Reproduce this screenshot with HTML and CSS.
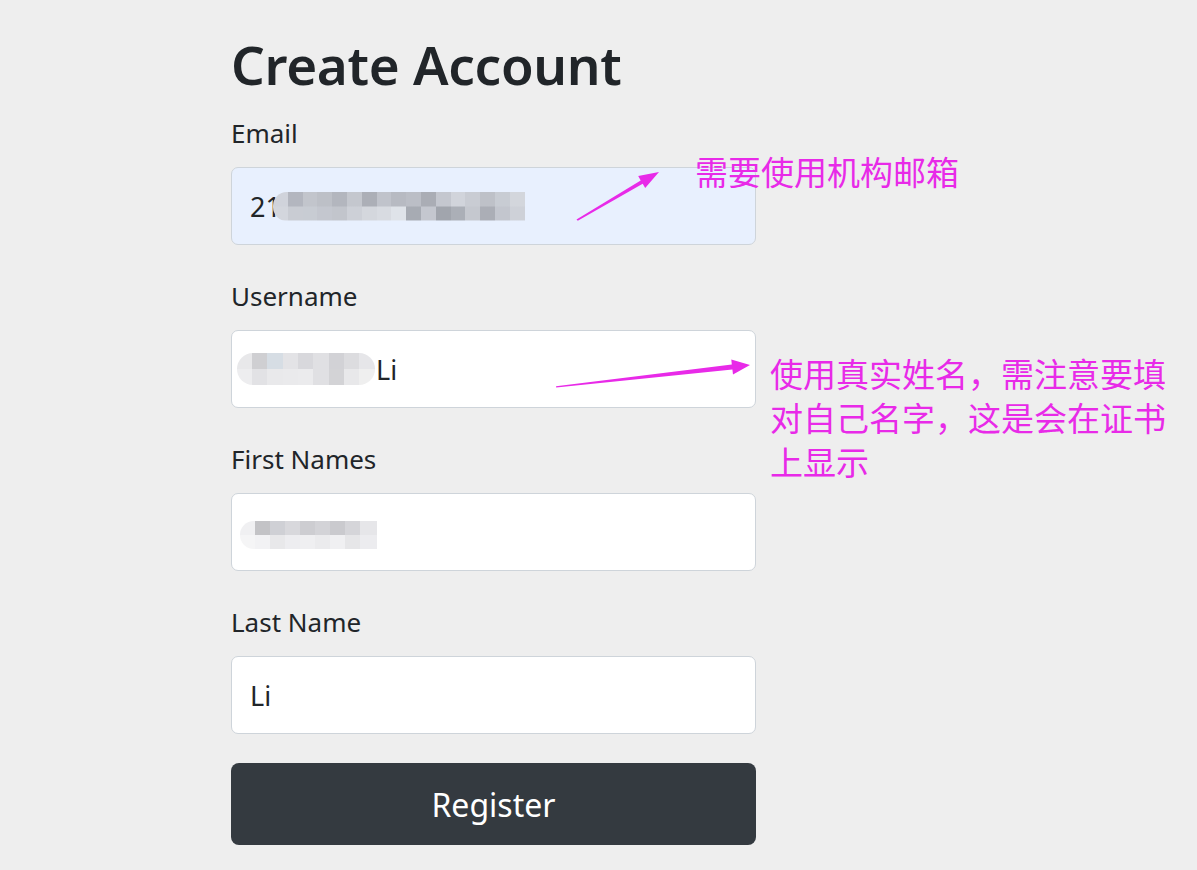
FILE: index.html
```html
<html>
  <head>
    <title>Create Account</title>
    <meta name="viewport" content="width=device-width, initial-scale=1.0" />
    <link rel="stylesheet" href="styles.css">
  </head>
  <body>
    <main class="page">
      <h1>Create Account</h1>
      <form id="register-form">
        <div class="group">
          <label for="email">Email</label>
          <div class="field field-autofill" id="email">21<span class="mosaic mosaic-email"></span></div>
        </div>
        <div class="group">
          <label for="username">Username</label>
          <div class="field" id="username"><span class="mosaic mosaic-user"></span>Li</div>
        </div>
        <div class="group">
          <label for="first-names">First Names</label>
          <div class="field" id="first-names"><span class="mosaic mosaic-first"></span></div>
        </div>
        <div class="group">
          <label for="last-name">Last Name</label>
          <div class="field" id="last-name">Li</div>
        </div>
        <button class="register" type="submit">Register</button>
      </form>
    </main>

    <!-- annotations drawn on top of the form -->
    <svg class="arrows" width="1197" height="870" viewBox="0 0 1197 870">
      <polygon points="576.5,219.5 640.7,180.4 638.2,176.1 659,172 645.2,188.1 642.7,183.8 577.8,220.8" />
      <polygon points="556,386.3 731.8,364.5 731.3,359.5 750,365 733,374.5 732.4,369.5 556.2,387.6" />
    </svg>
    <p class="note note-email">需要使用机构邮箱</p>
    <p class="note note-name">使用真实姓名，需注意要填对自己名字，这是会在证书上显示</p>
  </body>
</html>
```

FILE: styles.css
```css
:root {
  --text: #212529;
  --border: #ced4da;
  --note: #e82ae8;
}

html,
body,
button {
  font-family: "Noto Sans", "Open Sans", sans-serif;
  color: var(--text);
}

body {
  margin: 0;
  background: #eeeeee;
  min-height: 870px;
  position: relative;
}

.page {
  width: 525px;
  padding-left: 231px;
}

h1 {
  margin: 32px 0 15px;
  font-size: 53px;
  font-weight: 600;
  line-height: 65px;
  letter-spacing: -0.3px;
}

#register-form {
  display: flex;
  flex-direction: column;
  gap: 30px;
}

.group label {
  display: block;
  font-size: 26px;
  line-height: 42px;
  margin-bottom: 13px;
}

.field {
  box-sizing: border-box;
  height: 78px;
  padding: 0 18px;
  display: flex;
  align-items: center;
  background: #ffffff;
  border: 1px solid var(--border);
  border-radius: 7px;
  font-size: 27px;
  color: var(--text);
}

.field-autofill {
  background: #e8f0fe;
}

.mosaic {
  display: inline-block;
  height: 29px;
  border-radius: 14px 0 0 14px;
  background-repeat: no-repeat;
  background-size: 100% 50%;
  background-position: top, bottom;
}

.mosaic-email {
  width: 252px;
  margin-left: -8px;
  background-image:
    linear-gradient(to right, #d0d3db 0 15px, #b3b6bf 15px 30px, #c2c5cc 30px 44px, #bdc0c7 44px 59px, #b3b6be 59px 74px, #c4c7ce 74px 89px, #acafb7 89px 104px, #c0c3cb 104px 118px, #b7bac2 118px 133px, #bbbec6 133px 148px, #aaadb5 148px 163px, #c4c7cf 163px 178px, #d1d4db 178px 192px, #c9ccd3 192px 207px, #bec1c8 207px 222px, #c8ccd3 222px 237px, #d3d6dc 237px 252px),
    linear-gradient(to right, #d3d6dd 0 15px, #c9ccd3 15px 30px, #c8ccd3 30px 44px, #c4c7cf 44px 59px, #c2c5cc 59px 74px, #cdd0d7 74px 89px, #d4d7dd 89px 104px, #d8dbe1 104px 118px, #dfe3e9 118px 133px, #a7abb3 133px 148px, #c4c7cf 148px 163px, #a1a5ad 163px 178px, #abafb7 178px 192px, #c5c8cf 192px 207px, #abaeb6 207px 222px, #c3c6ce 222px 237px, #ced1d8 237px 252px);
}

.mosaic-user {
  width: 138px;
  height: 32px;
  margin-left: -13px;
  margin-right: 1px;
  border-radius: 16px;
  background-image:
    linear-gradient(to right, #e8e8ea 0 15px, #cfcfd2 15px 30px, #d6dde4 30px 46px, #e3e3e6 46px 61px, #d8d8dc 61px 76px, #e0e0e3 76px 92px, #d2d2d6 92px 107px, #dcdcdf 107px 122px, #e6e6e9 122px 138px),
    linear-gradient(to right, #ededef 0 15px, #e2e2e5 15px 30px, #e9e9eb 30px 46px, #eaeaec 46px 61px, #ebebed 61px 76px, #e0e0e3 76px 92px, #d3d3d6 92px 107px, #e8e8ea 107px 122px, #efefef 122px 138px);
}

.mosaic-first {
  width: 137px;
  height: 28px;
  margin-left: -10px;
  margin-top: 6px;
  background-image:
    linear-gradient(to right, #f0f0f2 0 15px, #c3c3c6 15px 30px, #cfd0d5 30px 45px, #d8d8dc 45px 60px, #cdcdd1 60px 75px, #d3d3d7 75px 90px, #cacace 90px 105px, #d5d5d9 105px 120px, #e6e6e9 120px 137px),
    linear-gradient(to right, #f5f5f6 0 15px, #f2f2f4 15px 30px, #e8e8ea 30px 45px, #ededf0 45px 60px, #efeff1 60px 75px, #ebebed 75px 90px, #f0f0f2 90px 105px, #e6e6e8 105px 120px, #ececef 120px 137px);
}

.register {
  box-sizing: border-box;
  height: 82px;
  margin-top: -1px;
  border: 0;
  border-radius: 8px;
  background: #343a40;
  color: #ffffff;
  font-size: 32px;
  cursor: pointer;
}

.arrows {
  position: absolute;
  left: 0;
  top: 0;
  pointer-events: none;
  fill: var(--note);
}

.note {
  position: absolute;
  margin: 0;
  font-family: "Noto Sans CJK SC", sans-serif;
  font-size: 33px;
  line-height: 44px;
  color: var(--note);
}

.note-email {
  left: 695px;
  top: 149px;
}

.note-name {
  left: 770px;
  top: 351px;
  width: 400px;
}
```
